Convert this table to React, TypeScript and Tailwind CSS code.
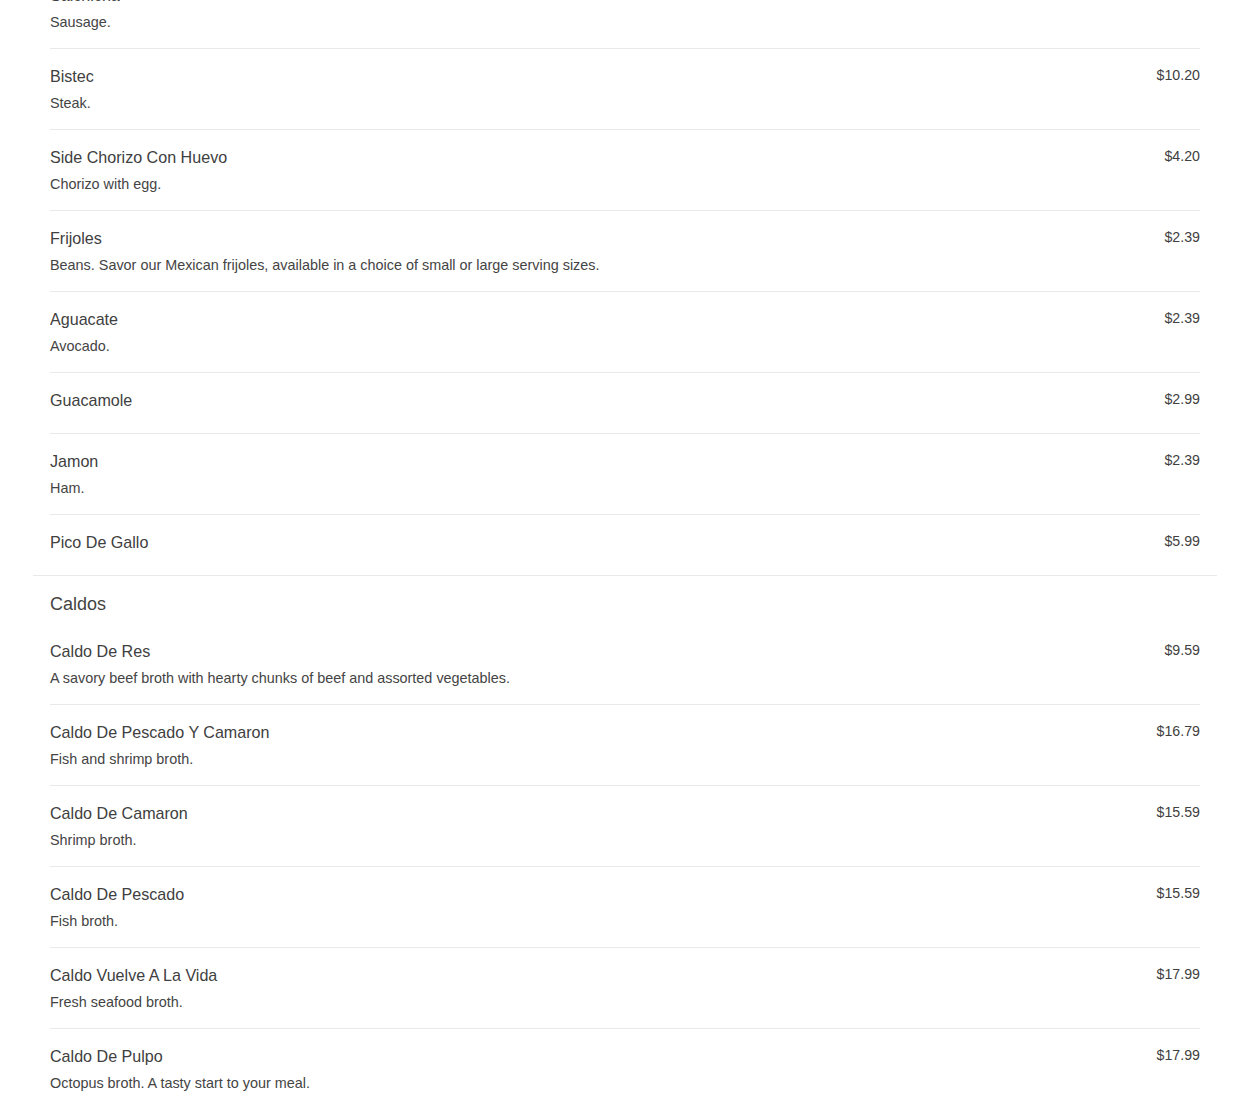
const sides = [
  { name: "Salchicha", desc: "Sausage.", price: "$3.59" },
  { name: "Bistec", desc: "Steak.", price: "$10.20" },
  { name: "Side Chorizo Con Huevo", desc: "Chorizo with egg.", price: "$4.20" },
  {
    name: "Frijoles",
    desc: "Beans. Savor our Mexican frijoles, available in a choice of small or large serving sizes.",
    price: "$2.39",
  },
  { name: "Aguacate", desc: "Avocado.", price: "$2.39" },
  { name: "Guacamole", desc: "", price: "$2.99" },
  { name: "Jamon", desc: "Ham.", price: "$2.39" },
  { name: "Pico De Gallo", desc: "", price: "$5.99" },
];

const caldos = [
  {
    name: "Caldo De Res",
    desc: "A savory beef broth with hearty chunks of beef and assorted vegetables.",
    price: "$9.59",
  },
  { name: "Caldo De Pescado Y Camaron", desc: "Fish and shrimp broth.", price: "$16.79" },
  { name: "Caldo De Camaron", desc: "Shrimp broth.", price: "$15.59" },
  { name: "Caldo De Pescado", desc: "Fish broth.", price: "$15.59" },
  { name: "Caldo Vuelve A La Vida", desc: "Fresh seafood broth.", price: "$17.99" },
  { name: "Caldo De Pulpo", desc: "Octopus broth. A tasty start to your meal.", price: "$17.99" },
];

interface Item {
  name: string;
  desc: string;
  price: string;
}

function MenuRow({ item, last }: { item: Item; last?: boolean }) {
  return (
    <div
      className={`flex justify-between pt-[17px] pb-[16px] ${
        last ? "" : "border-b border-[#e9e9e9]"
      }`}
    >
      <div>
        <div className="text-[16.1px] leading-[20px] mb-[7px] text-[#404040]">{item.name}</div>
        {item.desc && (
          <div className="text-[14.4px] leading-[20px] text-[#444]">{item.desc}</div>
        )}
      </div>
      <div className="text-[14.2px] leading-[18px] text-[#404040]">{item.price}</div>
    </div>
  );
}

export default function App() {
  return (
    <div
      className="bg-white min-h-screen overflow-hidden"
      style={{ fontFamily: '"Liberation Sans", Arial, sans-serif' }}
    >
      <div className="mx-[33px] -mt-[32px]">
        <div className="px-[17px] border-b border-[#e9e9e9]">
          {sides.map((item, i) => (
            <MenuRow key={item.name} item={item} last={i === sides.length - 1} />
          ))}
        </div>
        <div className="px-[17px]">
          <h2 className="pt-[17px] pb-[9px] text-[18px] leading-[22px] text-[#444]">Caldos</h2>
          {caldos.map((item) => (
            <MenuRow key={item.name} item={item} />
          ))}
        </div>
      </div>
    </div>
  );
}
